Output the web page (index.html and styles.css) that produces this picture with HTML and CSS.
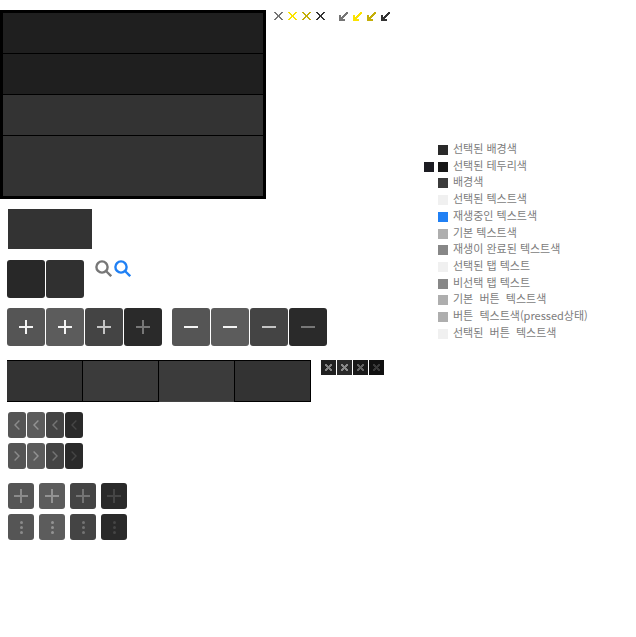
FILE: index.html
```html
<!DOCTYPE html>
<html lang="ko">
<head>
<meta charset="utf-8">
<meta name="viewport" content="width=device-width, initial-scale=1">
<title>UI</title>
<link rel="stylesheet" href="styles.css">
</head>
<body>
<svg class="defs" aria-hidden="true">
  <symbol id="x" viewBox="0 0 9 9"><path d="M0 0h2v1H0zM7 0h2v1H7zM1 1h2v1H1zM6 1h2v1H6zM2 2h2v1H2zM5 2h2v1H5zM3 3h3v2H3zM2 5h2v1H2zM5 5h2v1H5zM1 6h2v1H1zM6 6h2v1H6zM0 7h2v1H0zM7 7h2v1H7z" fill="currentColor"/></symbol>
  <symbol id="arrow" viewBox="0 0 9 9"><path d="M7 0h2v1H7zM6 1h3v1H6zM5 2h3v1H5zM0 3h2v1H0zM4 3h3v1H4zM0 4h2v1H0zM3 4h3v1H3zM0 5h5v1H0zM0 6h4v1H0zM0 7h6v2H0z" fill="currentColor"/></symbol>
  <symbol id="search" viewBox="0 0 17 17"><circle cx="7" cy="7" r="5.6" fill="none" stroke="currentColor" stroke-width="2.4"/><path d="m11 11 5.2 5.2" stroke="currentColor" stroke-width="2.4"/></symbol>
  <symbol id="plus" viewBox="0 0 14 14"><path d="M0 6h14v2H0zM6 0h2v14H6z" fill="currentColor"/></symbol>
  <symbol id="minus" viewBox="0 0 14 14"><path d="M0 6h14v2H0z" fill="currentColor"/></symbol>
  <symbol id="close" viewBox="0 0 7 7"><path d="M0 0h2v1H0zM5 0h2v1H5zM0 1h3v1H0zM4 1h3v1H4zM1 2h5v1H1zM2 3h3v1H2zM1 4h5v1H1zM0 5h3v1H0zM4 5h3v1H4zM0 6h2v1H0zM5 6h2v1H5z" fill="currentColor"/></symbol>
  <symbol id="left" viewBox="0 0 6 10"><path d="M5.4.6 1 5l4.4 4.4" fill="none" stroke="currentColor" stroke-width="1.4"/></symbol>
  <symbol id="right" viewBox="0 0 6 10"><path d="M.6.6 5 5 .6 9.4" fill="none" stroke="currentColor" stroke-width="1.4"/></symbol>
  <symbol id="dots" viewBox="0 0 4 14"><g fill="currentColor"><circle cx="2.5" cy="2.5" r="1.5"/><circle cx="2.5" cy="7.5" r="1.5"/><circle cx="2.5" cy="12.5" r="1.5"/></g></symbol>
</svg>
<main class="parts">
  <div class="row top">
    <div class="panel"><div class="sel"></div><div class="sel"></div><div></div><div class="tall"></div></div>
    <div class="marks">
      <button class="mark gray" aria-label="닫기"><svg><use href="#x"/></svg></button>
      <button class="mark yellow" aria-label="닫기"><svg><use href="#x"/></svg></button>
      <button class="mark gold" aria-label="닫기"><svg><use href="#x"/></svg></button>
      <button class="mark dark" aria-label="닫기"><svg><use href="#x"/></svg></button>
    </div>
    <div class="marks arrows">
      <button class="mark gray" aria-label="축소"><svg><use href="#arrow"/></svg></button>
      <button class="mark yellow" aria-label="축소"><svg><use href="#arrow"/></svg></button>
      <button class="mark gold" aria-label="축소"><svg><use href="#arrow"/></svg></button>
      <button class="mark dark" aria-label="축소"><svg><use href="#arrow"/></svg></button>
    </div>
  </div>
  <div class="block"></div>
  <div class="row squares">
    <button class="btn large selected" aria-label="선택된 버튼"></button>
    <button class="btn large plain" aria-label="버튼"></button>
    <div class="searches">
      <button class="search" aria-label="검색"><svg><use href="#search"/></svg></button>
      <button class="search active" aria-label="검색"><svg><use href="#search"/></svg></button>
    </div>
  </div>
  <div class="row zooms">
    <div class="group">
      <button class="btn large normal" aria-label="확대"><svg><use href="#plus"/></svg></button>
      <button class="btn large hover" aria-label="확대"><svg><use href="#plus"/></svg></button>
      <button class="btn large pressed" aria-label="확대"><svg><use href="#plus"/></svg></button>
      <button class="btn large off" aria-label="확대"><svg><use href="#plus"/></svg></button>
    </div>
    <div class="group">
      <button class="btn large normal" aria-label="축소"><svg><use href="#minus"/></svg></button>
      <button class="btn large hover" aria-label="축소"><svg><use href="#minus"/></svg></button>
      <button class="btn large pressed" aria-label="축소"><svg><use href="#minus"/></svg></button>
      <button class="btn large off" aria-label="축소"><svg><use href="#minus"/></svg></button>
    </div>
  </div>
  <div class="row tabs-row">
    <div class="tabs">
      <button class="tab" aria-label="탭 1"></button>
      <button class="tab light" aria-label="탭 2"></button>
      <button class="tab light open" aria-label="탭 3"></button>
      <button class="tab" aria-label="탭 4"></button>
    </div>
    <div class="closes">
      <button class="close c1" aria-label="닫기"><svg><use href="#close"/></svg></button>
      <button class="close c2" aria-label="닫기"><svg><use href="#close"/></svg></button>
      <button class="close c3" aria-label="닫기"><svg><use href="#close"/></svg></button>
      <button class="close c4" aria-label="닫기"><svg><use href="#close"/></svg></button>
    </div>
  </div>
  <div class="arrows-grid">
    <button class="btn narrow normal" aria-label="이전"><svg><use href="#left"/></svg></button>
    <button class="btn narrow hover" aria-label="이전"><svg><use href="#left"/></svg></button>
    <button class="btn narrow pressed" aria-label="이전"><svg><use href="#left"/></svg></button>
    <button class="btn narrow off" aria-label="이전"><svg><use href="#left"/></svg></button>
    <button class="btn narrow normal" aria-label="다음"><svg><use href="#right"/></svg></button>
    <button class="btn narrow hover" aria-label="다음"><svg><use href="#right"/></svg></button>
    <button class="btn narrow pressed" aria-label="다음"><svg><use href="#right"/></svg></button>
    <button class="btn narrow off" aria-label="다음"><svg><use href="#right"/></svg></button>
  </div>
  <div class="small-grid">
    <button class="btn small normal" aria-label="추가"><svg><use href="#plus"/></svg></button>
    <button class="btn small hover" aria-label="추가"><svg><use href="#plus"/></svg></button>
    <button class="btn small pressed" aria-label="추가"><svg><use href="#plus"/></svg></button>
    <button class="btn small off" aria-label="추가"><svg><use href="#plus"/></svg></button>
    <button class="btn small more normal" aria-label="더보기"><svg><use href="#dots"/></svg></button>
    <button class="btn small more hover" aria-label="더보기"><svg><use href="#dots"/></svg></button>
    <button class="btn small more pressed" aria-label="더보기"><svg><use href="#dots"/></svg></button>
    <button class="btn small more off" aria-label="더보기"><svg><use href="#dots"/></svg></button>
  </div>
</main>
<ul class="legend">
  <li><span class="swatches"><i class="s-selected"></i></span>선택된 배경색</li>
  <li><span class="swatches"><i class="s-edge"></i><i class="s-border"></i></span>선택된 테두리색</li>
  <li><span class="swatches"><i class="s-back"></i></span>배경색</li>
  <li><span class="swatches"><i class="s-white"></i></span>선택된 텍스트색</li>
  <li><span class="swatches"><i class="s-blue"></i></span>재생중인 텍스트색</li>
  <li><span class="swatches"><i class="s-light"></i></span>기본 텍스트색</li>
  <li><span class="swatches"><i class="s-gray"></i></span>재생이 완료된 텍스트색</li>
  <li><span class="swatches"><i class="s-white"></i></span>선택된 탭 텍스트</li>
  <li><span class="swatches"><i class="s-gray"></i></span>비선택 탭 텍스트</li>
  <li><span class="swatches"><i class="s-light"></i></span>기본  버튼  텍스트색</li>
  <li><span class="swatches"><i class="s-light"></i></span>버튼  텍스트색(pressed상태)</li>
  <li><span class="swatches"><i class="s-white"></i></span>선택된  버튼  텍스트색</li>
</ul>
</body>
</html>
```
FILE: styles.css
```css
* { box-sizing: border-box; }

body {
  margin: 0;
  display: grid;
  grid-template-columns: 2fr 1fr;
  align-items: start;
  background: #fff;
  font-family: "Noto Sans CJK KR", sans-serif;
}

.defs { position: absolute; width: 0; height: 0; }

button {
  display: flex;
  align-items: center;
  justify-content: center;
  padding: 0;
  border: 0;
  background: none;
}

button svg { display: block; }

.parts { min-width: 0; padding-top: 10px; }
.row { display: flex; align-items: flex-start; }

.panel {
  width: 266px;
  display: grid;
  gap: 1px;
  border: 3px solid #000;
  background: #000;
}
.panel div { height: 40px; background: #333; }
.panel .sel { background: #1f1f1f; }
.panel .tall { height: 60px; }

.marks { display: flex; gap: 5px; padding: 2px 0 0 8px; }
.marks.arrows { padding-left: 14px; }
.mark svg { width: 9px; height: 9px; }
.gray { color: #757575; }
.yellow { color: #fbe300; }
.gold { color: #c4ae08; }
.dark { color: #333; }

.block { width: 84px; height: 40px; margin: 10px 0 0 8px; background: #333; }

.squares { margin: 11px 0 0 7px; gap: 1px; }
.searches { display: flex; gap: 2px; padding-left: 10px; }
.search { color: #777; }
.search.active { color: #2080f4; }
.search svg { width: 17px; height: 17px; }

.btn { border-radius: 3px; }
.large { width: 38px; height: 38px; }
.narrow { width: 18px; height: 26px; }
.small { width: 26px; height: 26px; }
.large svg, .small svg { width: 14px; height: 14px; }
.narrow svg { width: 6px; height: 10px; }
.small.more svg { width: 4px; }

.selected { background: #282828; }
.plain { background: #303030; }
.normal { background: #555; color: #8b8b8b; }
.hover { background: #5c5c5c; color: #939393; }
.pressed { background: #444; color: #747474; }
.off { background: #2a2a2a; color: #454545; }
.large.normal, .large.hover { color: #f4f4f4; }
.large.pressed { color: #c4c4c4; }
.large.off { color: #777; }

.zooms { margin: 10px 0 0 7px; gap: 10px; }
.group { display: flex; gap: 1px; }

.tabs-row { margin: 14px 0 0 7px; gap: 10px; }
.tabs { display: flex; border-top: 1px solid #000; }
.tab {
  width: 76px;
  height: 41px;
  background: #333;
  box-shadow: inset -1px -1px #000;
}
.tab.light { background: #3b3b3b; }
.tab.open { box-shadow: inset -1px 0 #000, inset 0 -1px #444; }

.closes { display: flex; gap: 1px; }
.close { width: 15px; height: 15px; }
.close svg { width: 7px; height: 7px; }
.c1 { background: #202020; color: #808080; }
.c2 { background: #292929; color: #888; }
.c3 { background: #191919; color: #606060; }
.c4 { background: #101010; color: #383838; }

.arrows-grid {
  display: grid;
  grid-template-columns: repeat(4, max-content);
  gap: 5px 1px;
  margin: 10px 0 0 8px;
}
.small-grid {
  display: grid;
  grid-template-columns: repeat(4, max-content);
  gap: 5px;
  margin: 14px 0 0 8px;
}

.legend {
  list-style: none;
  margin: 140px 0 0;
  padding: 0;
  height: 200px;
  display: flex;
  flex-direction: column;
  justify-content: space-between;
  color: #7c7c7c;
  font-size: 11px;
  line-height: 16px;
  white-space: pre;
}
.legend li { display: flex; gap: 5px; }
.swatches {
  width: 24px;
  display: flex;
  justify-content: flex-end;
  gap: 4px;
  padding-top: 5px;
}
.swatches i { width: 10px; height: 10px; }
.s-selected { background: #2a2a2a; }
.s-edge { background: #1c1c22; }
.s-border { background: #171717; }
.s-back { background: #3b3b3b; }
.s-white { background: #f0f0f0; }
.s-blue { background: #2080f4; }
.s-light { background: #aeaeae; }
.s-gray { background: #878787; }
```
